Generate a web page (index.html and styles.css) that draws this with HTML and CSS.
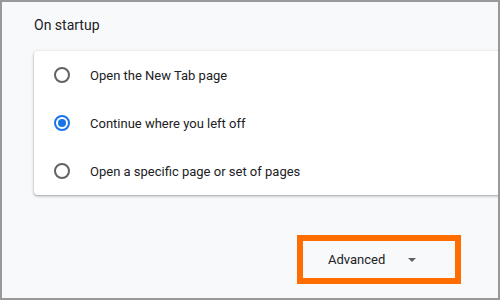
FILE: index.html
```html
<!DOCTYPE html>
<html lang="en">
  <head>
    <meta charset="UTF-8" />
    <meta name="viewport" content="width=device-width, initial-scale=1.0" />
    <title>Settings - On startup</title>
    <link rel="stylesheet" href="styles.css">
  </head>
  <body>
    <div class="frame">
      <h2 class="section-title">On startup</h2>
      <div class="card">
        <label class="option">
          <span class="radio"></span>
          <span class="option-label">Open the New Tab page</span>
        </label>
        <label class="option">
          <span class="radio checked"></span>
          <span class="option-label">Continue where you left off</span>
        </label>
        <label class="option">
          <span class="radio"></span>
          <span class="option-label">Open a specific page or set of pages</span>
        </label>
      </div>
      <div class="footer">
        <button class="advanced">
          <span>Advanced</span>
          <span class="arrow"></span>
        </button>
      </div>
    </div>
  </body>
</html>
```

FILE: styles.css
```css
body {
  margin: 0;
  font-family: Roboto, "Liberation Sans", Arial, sans-serif;
  color: #202124;
}

.frame {
  width: 464px;
  height: 283px;
  border: 2px solid #999;
  background-color: #f8f9fa;
  overflow: hidden;
  padding: 13px 0 0 32px;
}

.section-title {
  margin: 0 0 16px;
  font-size: 14px;
  font-weight: 400;
  line-height: 20px;
}

.card {
  background-color: #fff;
  border-radius: 4px;
  margin-right: -20px;
  box-shadow: 0 1px 2px rgba(60, 64, 67, 0.3), 0 1px 3px 1px rgba(60, 64, 67, 0.15);
}

.option {
  display: flex;
  align-items: center;
  height: 48px;
  padding-left: 20px;
  font-size: 13px;
}

.radio {
  width: 12px;
  height: 12px;
  border: 2px solid #5f6368;
  border-radius: 50%;
  margin-right: 20px;
  display: flex;
  align-items: center;
  justify-content: center;
}

.radio.checked {
  border-color: #1a73e8;
}

.radio.checked::after {
  content: "";
  width: 8px;
  height: 8px;
  border-radius: 50%;
  background-color: #1a73e8;
}

.footer {
  display: flex;
  justify-content: flex-end;
  padding-right: 37px;
  margin-top: 40px;
}

.advanced {
  display: flex;
  align-items: center;
  width: 164px;
  height: 49px;
  padding: 0 0 0 25px;
  border: 6px solid #ff6d00;
  background: none;
  font-family: inherit;
  font-size: 13px;
  color: #202124;
  cursor: pointer;
}

.arrow {
  margin-left: 23px;
  width: 0;
  height: 0;
  border-left: 4px solid transparent;
  border-right: 4px solid transparent;
  border-top: 4px solid #5f6368;
}
```
